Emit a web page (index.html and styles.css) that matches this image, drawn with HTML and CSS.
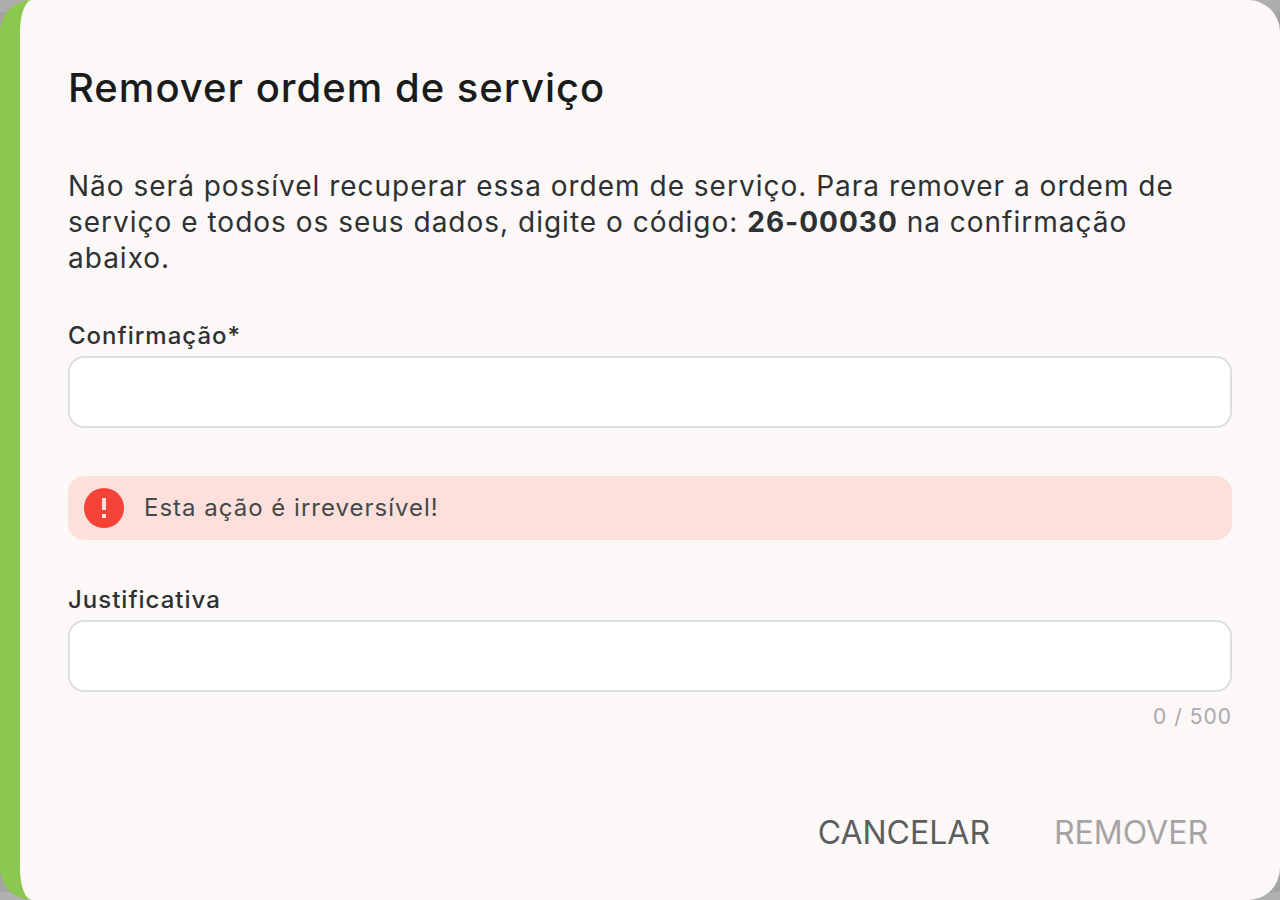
FILE: index.html
```html
<!DOCTYPE html>
<html lang="pt-BR">
<head>
<meta charset="utf-8">
<meta name="viewport" content="width=device-width, initial-scale=1">
<title>Remover ordem de serviço</title>
<link rel="stylesheet" href="styles.css">
</head>
<body>
<main class="dialog" role="dialog" aria-labelledby="title">
  <form class="content">
    <h1 class="title" id="title">Remover ordem de serviço</h1>
    <p class="message">Não será possível recuperar essa ordem de serviço. Para remover a ordem de serviço e todos os seus dados, digite o código: <strong>26-00030</strong> na confirmação abaixo.</p>
    <label class="label" for="confirm">Confirmação*</label>
    <input class="input" id="confirm" type="text" required>
    <div class="alert" role="alert">
      <svg class="alert-icon" viewBox="0 0 40 40" aria-hidden="true"><circle cx="20" cy="20" r="20" fill="#f44336"/><path d="M18 10h4v12h-4zM18 26h4v4h-4z" fill="#fde0dc"/></svg>
      <span>Esta ação é irreversível!</span>
    </div>
    <label class="label" for="reason">Justificativa</label>
    <input class="input" id="reason" type="text" maxlength="500">
    <p class="counter">0 / 500</p>
    <div class="actions">
      <button class="button" type="button">CANCELAR</button>
      <button class="button" type="submit" disabled>REMOVER</button>
    </div>
  </form>
</main>
</body>
</html>
```
FILE: styles.css
```css
* { box-sizing: border-box; }
body {
  margin: 0;
  background: linear-gradient(#adadad 12px, #a3a3a3 12px, #a3a3a3 calc(100% - 8px), #b0b0b0 calc(100% - 8px));
  color: #2e3132;
  font-family: Inter, sans-serif;
}
.dialog {
  min-height: 100vh;
  border-left: 20px solid #8cc850;
  border-radius: 32px;
  background: #fcf8f7;
}
.content {
  display: flex;
  flex-direction: column;
  min-height: 100vh;
  padding: 64px 48px 32px;
}
.title {
  margin: 0 0 56px;
  color: #1a1c1c;
  font-size: 40px;
  font-weight: 500;
  line-height: 48px;
  letter-spacing: 1px;
}
.message {
  margin: 0 0 48px;
  font-size: 28px;
  line-height: 36px;
  letter-spacing: 1px;
}
.label {
  margin-bottom: 8px;
  font-size: 24px;
  font-weight: 500;
  line-height: 24px;
  letter-spacing: 1px;
}
.input {
  width: 100%;
  height: 72px;
  padding: 0 20px;
  border: 2px solid #dededd;
  border-radius: 16px;
  background: #fff;
  color: inherit;
  font: inherit;
  font-size: 24px;
}
.alert {
  display: flex;
  align-items: center;
  gap: 20px;
  margin: 48px 0;
  padding: 12px 16px;
  border-radius: 16px;
  background: #fde0dc;
  color: #454849;
  font-size: 24px;
  line-height: 32px;
  letter-spacing: 1px;
}
.alert-icon { width: 40px; height: 40px; }
.counter {
  margin: 12px 0 0;
  color: #aba9a9;
  font-size: 21px;
  line-height: 26px;
  letter-spacing: 1px;
  text-align: right;
}
.actions {
  display: flex;
  justify-content: flex-end;
  gap: 16px;
  margin-top: auto;
}
.button {
  padding: 0 24px;
  border: 0;
  background: transparent;
  color: #5b5e5e;
  font: 32px/70px Inter, sans-serif;
}
.button:disabled { color: #a5a4a4; }
```
